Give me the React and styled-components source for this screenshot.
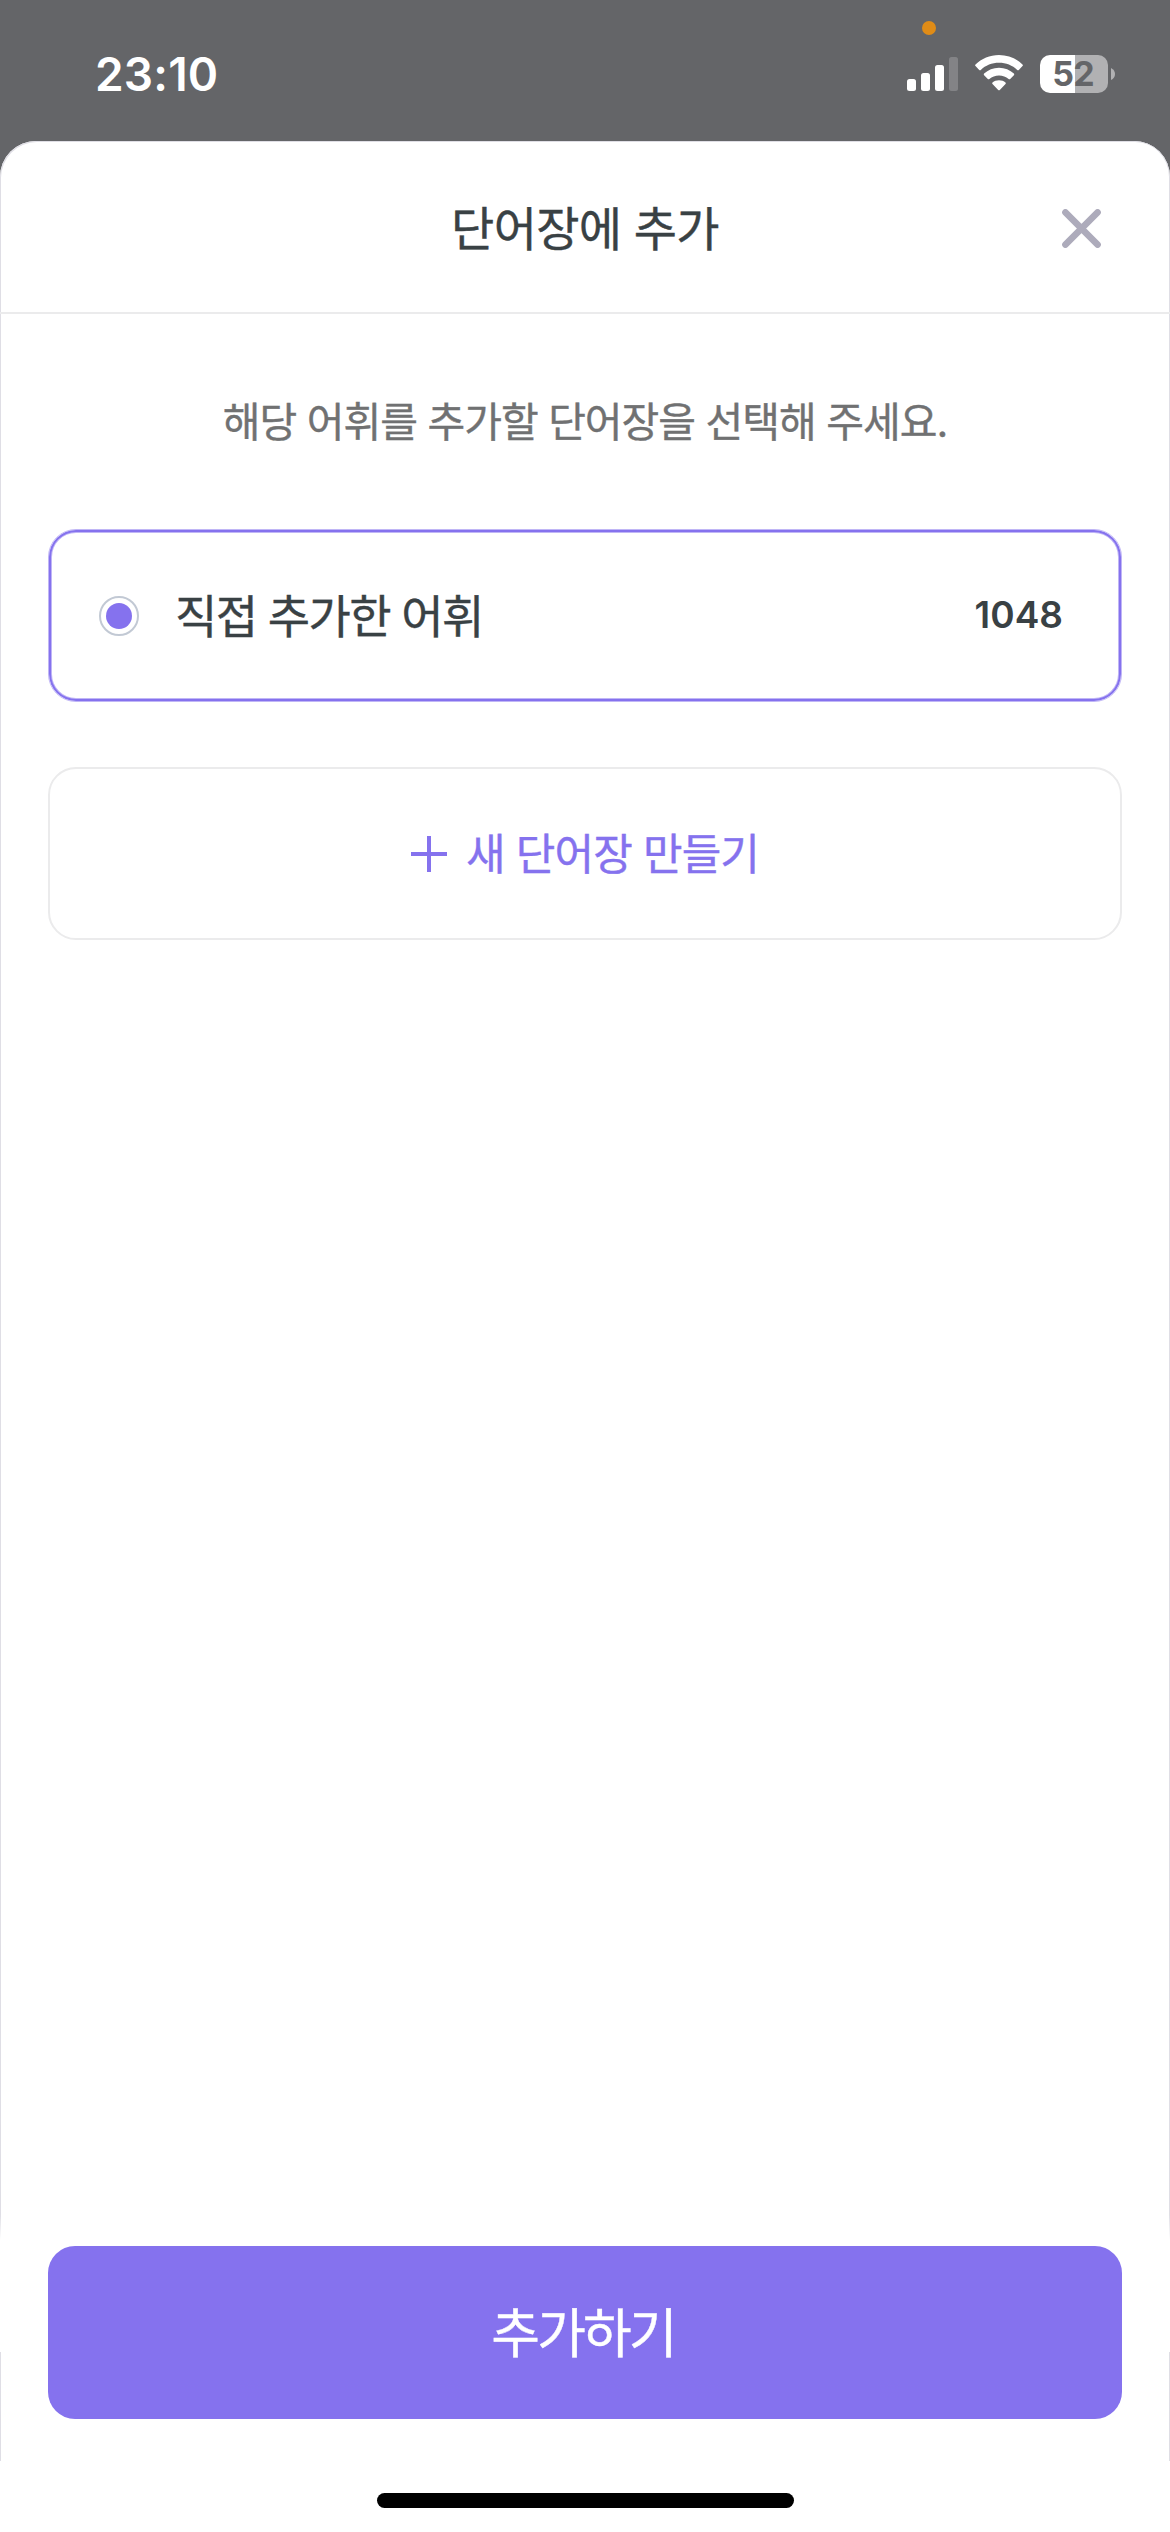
import React, { useState } from "react";
import styled, { createGlobalStyle } from "styled-components";

const GlobalStyle = createGlobalStyle`
  * {
    box-sizing: border-box;
  }
  body {
    margin: 0;
    background: #646568;
    font-family: Inter, "Noto Sans CJK KR", sans-serif;
  }
  button {
    font-family: inherit;
    cursor: pointer;
  }
`;

const Screen = styled.div`
  display: flex;
  flex-direction: column;
  width: 1170px;
  height: 2532px;
  overflow: hidden;
  background: #646568;
`;

const StatusBar = styled.div`
  position: relative;
  display: flex;
  align-items: center;
  justify-content: space-between;
  height: 141px;
  padding: 7px 55px 0 95px;
`;

const Time = styled.span`
  font-size: 46px;
  font-weight: 600;
  line-height: 56px;
  letter-spacing: 0.2px;
  color: #fff;
`;

const MicDot = styled.span`
  position: absolute;
  top: 21px;
  left: 922px;
  width: 14px;
  height: 14px;
  border-radius: 50%;
  background: #e08c17;
`;

const StatusIcons = styled.div`
  display: flex;
  align-items: center;
  gap: 17px;
`;

const Battery = styled.div`
  display: flex;
  align-items: center;
  gap: 3px;
`;

const BatteryBody = styled.div`
  display: flex;
  align-items: center;
  justify-content: center;
  width: 68px;
  height: 38px;
  padding-right: 2px;
  border-radius: 10px;
  background: linear-gradient(90deg, #fff 35px, #b1b1b3 35px);
  font-size: 34px;
  font-weight: 650;
  line-height: 38px;
  letter-spacing: -0.7px;
  color: #646568;
`;

const Sheet = styled.div`
  flex: 1;
  display: flex;
  flex-direction: column;
  border-radius: 36px 36px 0 0;
  background: #fff;
  box-shadow: inset 1px 1px 0 #dfdee5, inset -1px 0 0 #dfdee5;
  -webkit-text-stroke: 0.4px;
`;

const Header = styled.header`
  display: grid;
  grid-template-columns: 1fr auto 1fr;
  align-items: center;
  height: 173px;
  padding: 4px 69px 0;
  border-bottom: 2px solid #ebebec;
`;

const Title = styled.h1`
  grid-column: 2;
  margin: 0;
  font-size: 47px;
  font-weight: 400;
  line-height: 60px;
  letter-spacing: -0.7px;
  color: #394144;
`;

const CloseButton = styled.button`
  justify-self: end;
  display: flex;
  padding: 0;
  border: 0;
  background: none;
`;

const Content = styled.main`
  flex: 1;
  display: flex;
  flex-direction: column;
  padding: 78px 48px 0;
`;

const Guide = styled.p`
  margin: 0 0 77px;
  font-size: 41px;
  line-height: 60px;
  letter-spacing: -1px;
  text-align: center;
  color: #707172;
`;

const Option = styled.button`
  display: flex;
  align-items: center;
  height: 173px;
  margin-bottom: 65px;
  padding: 0 58px 0 50px;
  border: 1px solid ${(props) => (props.$selected ? "#c0b6f6" : "#ebebec")};
  border-radius: 28px;
  box-shadow: ${(props) =>
    props.$selected ? "inset 0 0 0 2px #8572ee, inset 0 0 0 3px #c0b6f6" : "none"};
  background: #fff;
  color: #394144;
`;

const Radio = styled.span`
  display: flex;
  align-items: center;
  justify-content: center;
  width: 40px;
  height: 40px;
  margin-right: 36px;
  border: 2px solid #c2c9d4;
  border-radius: 50%;

  &::after {
    content: "";
    width: 26px;
    height: 26px;
    border-radius: 50%;
    background: ${(props) => (props.$checked ? "#8572ee" : "transparent")};
  }
`;

const OptionName = styled.span`
  font-size: 46px;
  line-height: 60px;
  letter-spacing: -1.6px;
`;

const Count = styled.span`
  margin-left: auto;
  padding-bottom: 2px;
  font-size: 37px;
  font-weight: 600;
  line-height: 48px;
  -webkit-text-stroke: 0;
`;

const NewListButton = styled.button`
  display: flex;
  align-items: center;
  justify-content: center;
  gap: 19px;
  height: 173px;
  border: 2px solid #ebebec;
  border-radius: 28px;
  background: #fff;
  font-size: 43px;
  line-height: 60px;
  letter-spacing: -0.9px;
  color: #8572ee;
`;

/* the sheet's side edges fade out behind the button and come back below it */
const Footer = styled.footer`
  display: flex;
  flex-direction: column;
  align-items: center;
  padding: 31px 48px 24px;
  background: linear-gradient(#dfdee5, #dfdee5) 0 137px / 1px 109px no-repeat,
    linear-gradient(#dfdee5, #dfdee5) 100% 137px / 1px 109px no-repeat,
    linear-gradient(rgba(255, 255, 255, 0), #fff 25px);
`;

const SubmitButton = styled.button`
  width: 100%;
  height: 173px;
  margin-bottom: 74px;
  padding: 3px 4px 0 0;
  border: 0;
  border-radius: 27px;
  background: #8572ee;
  font-size: 53px;
  line-height: 60px;
  letter-spacing: -2.9px;
  color: #fff;
`;

const HomeIndicator = styled.div`
  width: 417px;
  height: 15px;
  border-radius: 8px;
  background: #000;
`;

const SignalIcon = () => (
  <svg width="51" height="34" viewBox="0 0 51 34" fill="#fff">
    <rect x="0" y="22" width="9" height="12" rx="2.5" />
    <rect x="14" y="16" width="9" height="18" rx="2.5" />
    <rect x="28" y="8" width="9" height="26" rx="2.5" />
    <rect x="42" y="0" width="9" height="34" rx="2.5" fillOpacity="0.2" />
  </svg>
);

const WifiIcon = () => (
  <svg width="48" height="38" viewBox="0 0 48 38" fill="#fff">
    <path d="M24 0C14.800 0 6.500 3.600 0.500 9.500Q-0.300 10.300 0.500 11.100L4.200 14.900Q5 15.700 5.800 14.900C10.500 10.400 17 7.800 24 7.800C31 7.800 37.500 10.400 42.200 14.900Q43 15.700 43.800 14.900L47.500 11.100Q48.300 10.300 47.500 9.500C41.500 3.600 33.200 0 24 0Z" />
    <path d="M24 12.700C18.200 12.700 13 15 9.100 18.600Q8.300 19.400 9.100 20.200L12.800 23.900Q13.600 24.700 14.400 23.900C17 21.700 20.300 20.400 24 20.400C27.700 20.400 31 21.700 33.600 23.900Q34.400 24.700 35.200 23.900L38.900 20.200Q39.700 19.400 38.900 18.600C35 15 29.800 12.700 24 12.700Z" />
    <path d="M24 25.300C21.400 25.300 19.200 26.100 17.500 27.500Q16.700 28.300 17.500 29.100L23.200 34.900Q24 35.700 24.800 34.900L30.500 29.100Q31.300 28.300 30.500 27.500C28.800 26.100 26.600 25.300 24 25.300Z" />
  </svg>
);

const CloseIcon = () => (
  <svg width="39" height="39" viewBox="0 0 39 39" stroke="#adabbb" strokeWidth="6.500" strokeLinecap="round">
    <path d="M3.400 3.400L35.600 35.600M35.600 3.400L3.400 35.600" />
  </svg>
);

const PlusIcon = () => (
  <svg width="36" height="36" viewBox="0 0 36 36" stroke="#8572ee" strokeWidth="4">
    <path d="M18 0V36M0 18H36" />
  </svg>
);

const wordLists = [{ id: 1, name: "직접 추가한 어휘", count: 1048 }];

function App() {
  const [selected, setSelected] = useState(1);

  return (
    <Screen>
      <GlobalStyle />
      <StatusBar>
        <Time>23:10</Time>
        <MicDot />
        <StatusIcons>
          <SignalIcon />
          <WifiIcon />
          <Battery>
            <BatteryBody>52</BatteryBody>
            <svg width="4" height="12" viewBox="0 0 4 12" fill="#b1b1b3">
              <path d="M0 0Q4 2 4 6Q4 10 0 12Z" />
            </svg>
          </Battery>
        </StatusIcons>
      </StatusBar>
      <Sheet>
        <Header>
          <Title>단어장에 추가</Title>
          <CloseButton aria-label="닫기">
            <CloseIcon />
          </CloseButton>
        </Header>
        <Content>
          <Guide>해당 어휘를 추가할 단어장을 선택해 주세요.</Guide>
          {wordLists.map((list) => (
            <Option
              key={list.id}
              $selected={selected === list.id}
              onClick={() => setSelected(list.id)}
            >
              <Radio $checked={selected === list.id} />
              <OptionName>{list.name}</OptionName>
              <Count>{list.count}</Count>
            </Option>
          ))}
          <NewListButton>
            <PlusIcon />
            새 단어장 만들기
          </NewListButton>
        </Content>
        <Footer>
          <SubmitButton>추가하기</SubmitButton>
          <HomeIndicator />
        </Footer>
      </Sheet>
    </Screen>
  );
}

export default App;
